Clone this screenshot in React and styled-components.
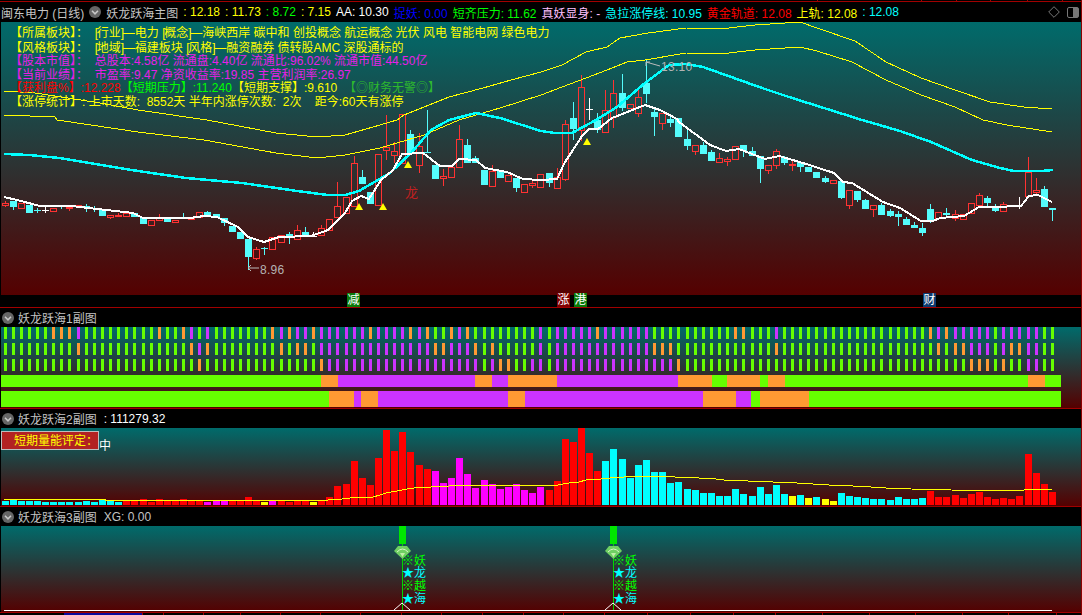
import React from "react";
import styled, { createGlobalStyle } from "styled-components";

const GlobalStyle = createGlobalStyle`
  html, body {
    margin: 0;
    background: #000;
    overflow: hidden;
  }
`;

const FONT = `"Liberation Sans", "Noto Sans CJK SC", sans-serif`;
const PANEL_BG = "linear-gradient(#006b6b, #550000)";

const Page = styled.div`
  width: 1082px;
  height: 615px;
  display: flex;
  flex-direction: column;
  background: #000;
  font-family: ${FONT};
  font-size: 12px;
  box-sizing: border-box;
  border-right: 1px solid #8c0000;
  overflow: hidden;
`;
const Rule = styled.div`
  flex: none;
  height: 1px;
  background: #a00000;
`;
const Axis = styled.svg`
  display: block;
  flex: none;
`;
const MainHeader = styled.div`
  flex: none;
  height: 20px;
  display: flex;
  align-items: center;
  padding-left: 1px;
  gap: 5px;
  white-space: pre;
`;
const SubHeader = styled.div`
  flex: none;
  height: 19px;
  display: flex;
  align-items: center;
  padding-left: 2px;
  white-space: pre;
`;
const Title = styled.span`
  color: #c4c4c4;
  margin-left: ${p => p.$indent || 0}px;
  margin-right: ${p => p.$after || 0}px;
`;
const Value = styled.span`
  color: ${p => p.$color};
`;
const Tools = styled.div`
  margin-left: auto;
  display: flex;
  align-items: center;
  gap: 7px;
  padding-right: 2px;
`;
const Panel = styled.div`
  position: relative;
  flex: none;
  height: ${p => p.$h}px;
  margin-left: 1px;
  background: ${PANEL_BG};
`;
const Chart = styled.svg`
  display: block;
  overflow: hidden;
  text {
    font-family: ${FONT};
  }
`;
const Info = styled.div`
  position: absolute;
  left: 9px;
  top: 5px;
  color: #ffff00;
  line-height: 13.6px;
  white-space: pre;
`;
const InfoRow = styled.div`
  color: ${p => p.$color || "#ffff00"};
  &:first-child {
    margin-bottom: 1px;
  }
`;
const Tone = styled.span`
  color: ${p => p.$color};
`;
const Square = styled.span`
  letter-spacing: -1.3px;
`;
const TagStrip = styled.div`
  position: relative;
  flex: none;
  height: 12px;
`;
const Tag = styled.span`
  position: absolute;
  left: ${p => p.$x}px;
  top: -2px;
  width: 13px;
  height: 14px;
  line-height: 14px;
  text-align: center;
  color: #fff;
  background: ${p => p.$bg};
`;
const VolumeBadge = styled.div`
  position: absolute;
  left: 0;
  top: 3px;
  width: 98px;
  height: 19px;
  box-sizing: border-box;
  border: 1px solid #bdbdbd;
  background: #b22222;
  color: #ffff00;
  padding-left: 12px;
  line-height: 18px;
`;
const VolumeLevel = styled.span`
  position: absolute;
  left: 98px;
  top: 8px;
  color: #fff;
`;

const CandleUp = "#ff3232";
const CandleDown = "#54fcfc";

// 蜡烛数据: 类型, 实体上沿, 实体下沿, 上影, 下影 (单位 1/3 像素, 以 y=120 为零点)
const CANDLES = [
  ["r", 250, 254, 242, 260], ["c", 243, 261, 243, 270], ["r", 250, 263], ["c", 255, 278],
  ["c", 270, 271, 263, 278], ["w", 270, 271, 262, 278], ["r", 265, 274], ["c", 259, 260, 254, 266],
  ["r", 262, 264, 256, 272], ["r", 256, 258], ["c", 258, 265, 252, 275], ["c", 263, 266, 258, 275],
  ["c", 270, 287], ["r", 286, 290, 286, 298], ["r", 286, 289, 280, 291], ["r", 280, 287],
  ["c", 280, 290], ["c", 290, 312], ["r", 300, 314], ["r", 294, 301, 282, 304],
  ["c", 297, 305], ["r", 300, 307], ["c", 291, 296, 280, 296], ["r", 290, 296],
  ["r", 277, 290], ["c", 277, 286, 272, 286], ["c", 283, 295], ["c", 294, 308, 294, 318],
  ["c", 318, 336], ["c", 336, 357], ["c", 357, 411, 357, 450], ["r", 388, 413, 382, 420],
  ["c", 384, 385, 380, 404], ["r", 352, 386, 352, 390], ["r", 344, 367], ["c", 343, 355, 337, 372],
  ["r", 331, 358, 315, 358], ["c", 337, 347, 322, 347], ["w", 347, 348, 335, 348], ["r", 325, 345, 316, 345],
  ["r", 297, 330], ["r", 259, 290, 186, 290], ["r", 230, 278], ["r", 130, 258, 108, 258],
  ["c", 171, 192, 150, 192], ["c", 217, 252], ["r", 103, 254], ["r", 82, 89, -15, 120],
  ["r", 92, 104, 65, 130], ["r", -18, 128], ["c", 42, 100, 30, 100], ["r", 78, 134, 40, 158],
  ["c", 95, 99, -30, 100], ["c", 135, 178], ["r", 168, 175, 148, 198], ["r", 140, 170],
  ["r", 57, 140, 15, 142], ["c", 75, 128, 58, 128], ["c", 115, 130, 108, 130], ["c", 150, 195],
  ["r", 153, 197, 135, 197], ["c", 153, 175], ["r", 165, 182], ["c", 175, 204, 175, 215],
  ["r", 193, 215], ["r", 190, 196, 180, 205], ["r", 162, 200], ["c", 160, 190, 160, 200],
  ["r", 172, 203, 145, 203], ["r", 12, 178, 0, 184], ["c", -5, 27, -55, 60], ["r", -98, 30, -134, 62],
  ["w", -32, -31, -65, 0], ["c", 0, 30, -20, 38], ["r", -30, 35, -90, 35], ["r", -80, -10, -120, 24],
  ["c", -80, -35, -138, -28], ["r", -47, -35], ["r", -68, -20, -90, -10], ["c", -110, -78, -180, -50],
  ["c", -24, -8, -40, 48], ["r", -20, 8, -20, 30], ["c", -3, 8, -15, 20], ["c", -5, 52],
  ["c", 57, 78, 20, 90], ["r", 76, 92, 76, 105], ["c", 76, 102, 66, 102], ["c", 97, 124, 90, 124],
  ["r", 114, 125, 100, 125], ["r", 118, 124, 110, 138], ["r", 79, 116], ["c", 76, 92, 76, 110],
  ["c", 92, 107, 82, 107], ["c", 107, 147, 107, 188], ["r", 136, 150, 136, 162], ["r", 94, 134, 88, 147],
  ["c", 115, 130, 108, 135], ["r", 131, 135, 118, 152], ["c", 127, 140, 127, 157], ["c", 140, 157],
  ["c", 155, 175], ["c", 173, 186, 168, 190], ["r", 181, 188], ["c", 183, 235, 183, 238],
  ["r", 210, 254, 210, 266], ["c", 212, 240, 212, 246], ["c", 241, 267, 238, 267], ["r", 256, 268, 256, 290],
  ["c", 255, 285, 250, 285], ["c", 273, 288, 268, 290], ["c", 282, 290, 272, 318], ["c", 297, 315, 292, 315],
  ["c", 315, 323, 307, 323], ["c", 324, 340, 310, 347], ["c", 267, 302, 252, 308], ["r", 277, 293],
  ["c", 279, 285, 265, 295], ["r", 281, 293, 270, 303], ["r", 281, 298], ["r", 250, 280],
  ["r", 226, 256, 220, 256], ["c", 233, 249, 228, 262], ["c", 262, 272, 252, 275], ["r", 253, 274, 245, 274],
  ["r", 254, 256], ["w", 255, 256, 232, 268], ["r", 155, 228, 112, 228], ["r", 210, 217, 175, 222],
  ["c", 207, 261, 198, 261], ["c", 264, 271, 264, 302],
];

const barX = i => Math.round(4.5 + 8.12 * i);
const py = v => 120 + v / 3;

const UPPER_BAND = "4,91 35,93 100,103 138,110 207,120 276,133 317,137 345,135 380,125 397,120 404,115 449,97 483,88 511,80 541,72 562,65 586,52 607,47 620,38 648,33 686,28 720,29 755,25 800,22 817,28 855,41 886,62 921,78 955,90 990,102 1024,107 1052,109";
const LOWER_BAND = "4,115 55,117 57,120 138,132 204,140 276,153 317,158 345,155 380,148 424,135 459,120 500,108 541,95 562,87 586,78 607,70 627,62 645,60 686,53 720,54 755,50 800,47 817,51 852,62 886,80 921,95 955,107 983,120 1007,125 1052,132";
const CYAN_LINE = "4,154 29,155 59,158 138,171 186,178 242,183 297,191 328,195 345,195 359,191 390,173 411,153 431,130 449,120 476,113 500,118 541,131 555,133 572,133 596,120 617,107 645,83 669,65 686,64 703,67 734,78 762,88 789,97 862,120 900,131 931,142 972,160 1000,168 1014,171 1041,171 1053,170";
const WHITE_LINE = "4,197 17,200 40,206 72,206 97,209 133,213 143,218 190,218 204,216 217,217 238,227 248,237 264,242 279,237 311,236 328,230 345,213 352,201 361,196 369,199 381,180 393,170 402,154 423,153 440,166 452,166 459,159 476,160 485,168 507,172 523,179 541,180 557,179 565,162 573,150 582,136 589,129 598,129 612,118 645,105 660,110 677,119 679,122 710,145 726,151 739,149 765,159 779,156 803,163 834,173 843,182 852,183 883,202 900,208 921,221 933,221 940,218 964,216 979,207 993,207 1021,206 1029,196 1038,195 1052,202";
const VOLUME_AVG = "4,499 105,499 105,500 328,500 342,499 350,498 359,497 373,497 380,495 386,493 397,491 407,489 414,488 431,487 449,486 462,485 528,485 541,486 558,485 569,483 579,482 586,480 601,479 610,478 624,477 651,476 675,477 699,478 716,479 724,480 748,481 773,482 797,483 813,484 829,485 853,486 871,487 886,488 911,489 951,490 992,491 1024,490 1041,489 1052,489";

const WARN_MARKS = [[359, 207], [383, 207], [408, 165], [587, 142]];

const Candle = ({ data, i }) => {
  const [kind, top, bottom, hi = top, lo = bottom] = data;
  const x = barX(i);
  if (kind === "w") {
    return (
      <g stroke="#fff">
        <line x1={x + 0.5} x2={x + 0.5} y1={py(hi)} y2={py(lo)} />
        <line x1={x - 3} x2={x + 4} y1={Math.round(py(top)) + 0.5} y2={Math.round(py(top)) + 0.5} />
      </g>
    );
  }
  const t = Math.round(py(top));
  const b = Math.round(py(bottom));
  if (kind === "r") {
    return (
      <g stroke={CandleUp} fill="none">
        <line x1={x + 0.5} x2={x + 0.5} y1={py(hi)} y2={t} />
        <line x1={x + 0.5} x2={x + 0.5} y1={b} y2={py(lo)} />
        <rect x={x - 3 + 0.5} y={t + 0.5} width={6} height={Math.max(b - t, 1)} />
      </g>
    );
  }
  return (
    <g stroke={CandleDown} fill={CandleDown}>
      <line x1={x + 0.5} x2={x + 0.5} y1={py(hi)} y2={py(lo)} />
      <rect x={x - 3} y={t} width={7} height={Math.max(b - t, 1)} stroke="none" />
    </g>
  );
};

const MainChart = () => (
  <Chart width="1080" height="273" viewBox="1 22 1080 273">
    <g shapeRendering="crispEdges">
      {CANDLES.map((c, i) => <Candle key={i} data={c} i={i} />)}
      <polyline points={UPPER_BAND} fill="none" stroke="#ffff00" strokeWidth="1" />
      <polyline points={LOWER_BAND} fill="none" stroke="#ffff00" strokeWidth="1" />
      <polyline points={CYAN_LINE} fill="none" stroke="#00ffff" strokeWidth="2.5" />
      <polyline points={WHITE_LINE} fill="none" stroke="#fff" strokeWidth="2" />
    </g>
    {WARN_MARKS.map(([x, y]) => (
      <polygon key={x} points={`${x},${y - 4} ${x + 4},${y + 3} ${x - 4},${y + 3}`} fill="#ffff00" />
    ))}
    <text x="405" y="197" fontSize="13" fill="#c02020">龙</text>
    <path d="M646 62 L646 66 M646 62 L650 62 M646 62 L660 66" stroke="#bbb" fill="none" />
    <text x="661" y="71" fontSize="12" fill="#b4b4b4" letterSpacing="0.3">13.10</text>
    <path d="M248 268 L259 268 M248 268 L251 265 M248 268 L251 271" stroke="#bbb" fill="none" />
    <text x="260" y="274" fontSize="12" fill="#b4b4b4" letterSpacing="0.3">8.96</text>
  </Chart>
);

// 每根K线的状态: 游程写法, 如 6g = 连续6根绿
const expandRuns = runs =>
  [...runs.matchAll(/(\d+)([gop])/g)].flatMap(m => Array(Number(m[1])).fill(m[2]));

const TREND_ROWS = [
  "6g3o1p9g1o2g1o1p1g1p7g1o1p1o2p1o6p1o4p1o1p1o2g1o1p1o8g1p1g5p1o6p10g2o3g1p18g1o1p1o5p1g5p2g",
  "9g1o13g1o1p1o8g1o1g2o1g14p2o3p1o1g1o5g1p1g12p3o12g1o19g1o1g2o3p1g1p2o2p2g",
  "24g1o14g1o19p1g1p2o2g2p1g15p1o35g3o1g1o2g2p2g",
].map(expandRuns);

const STRIPE = { g: "#66ff00", o: "#ff9933", p: "#cc33ff" };

const TREND_BANDS = [
  { y: 375, h: 12, stops: [[1, "g"], [321, "o"], [338, "p"], [475, "o"], [492, "p"], [508, "o"], [557, "p"], [678, "o"], [712, "g"], [727, "o"], [760, "g"], [768, "o"], [785, "g"], [1028, "o"], [1045, "g"], [1061, null]] },
  { y: 391, h: 16, stops: [[1, "g"], [329, "o"], [354, "p"], [361, "o"], [378, "p"], [508, "o"], [525, "p"], [703, "o"], [736, "p"], [751, "g"], [760, "o"], [809, "g"], [1061, null]] },
];

const TrendChart = () => (
  <Chart width="1080" height="81" viewBox="1 327 1080 81" shapeRendering="crispEdges">
    {TREND_ROWS.map((row, r) =>
      row.map((c, i) => (
        <rect key={`${r}-${i}`} x={barX(i) - 1} y={327 + r * 16} width="3" height="12" fill={STRIPE[c]} />
      ))
    )}
    {TREND_BANDS.map(band =>
      band.stops.slice(0, -1).map(([x, c], i) => (
        <rect key={`${band.y}-${x}`} x={x} y={band.y} width={band.stops[i + 1][0] - x} height={band.h} fill={STRIPE[c]} />
      ))
    )}
  </Chart>
);

const VOLUMES = [
  228, 225, 228, 228, 228, 231, 231, 231, 231, 231, 228, 231, 224, 227, 231,
  228, 228, 222, 231, 222, 227, 227, 222, 227, 228, 231, 227, 227, 228, 228,
  216, 228, 231, 227, 228, 231, 228, 228, 231, 228, 216, 183, 177, 108, 159,
  180, 99, 15, 78, 21, 81, 120, 132, 138, 174, 159, 99, 147, 189, 165,
  177, 192, 186, 177, 195, 204, 186, 195, 168, 42, 51, 9, 84, 138, 108,
  72, 102, 159, 120, 105, 141, 141, 174, 171, 192, 195, 204, 204, 213, 213,
  192, 207, 213, 186, 207, 180, 207, 213, 210, 219, 216, 222, 228, 204, 213,
  216, 219, 222, 222, 225, 216, 222, 222, 219, 198, 216, 216, 210, 219, 207,
  201, 216, 222, 219, 222, 213, 87, 144, 177, 201,
];

const volumeColor = i => {
  if ([32, 38, 97, 99, 101, 102].includes(i)) return "#ffff00";
  if (i === 33 || i === 25 || i === 26 || i === 27) return "#ff00ff";
  if (i < 15 || (i >= 74 && i < 114)) return "#00ffff";
  if (i >= 53 && i <= 66) return "#ff00ff";
  return "#ff0000";
};

const VolumeChart = () => (
  <Chart width="1080" height="78" viewBox="1 428 1080 78" shapeRendering="crispEdges">
    {VOLUMES.map((v, i) => {
      const y = Math.round(425 + v / 3);
      return <rect key={i} x={barX(i) - 3} y={y} width="7" height={505 - y} fill={volumeColor(i)} />;
    })}
    <polyline points={VOLUME_AVG} fill="none" stroke="#ffff00" strokeWidth="1" />
  </Chart>
);

const SIGNAL_ROWS = [
  { y: 565, mark: "※", word: "妖", fill: "#00ff00" },
  { y: 577, mark: "★", word: "龙", fill: "#00ffff" },
  { y: 590, mark: "※", word: "越", fill: "#00ff00" },
  { y: 603, mark: "★", word: "海", fill: "#00ffff" },
];

const SignalMark = ({ x }) => (
  <g>
    <rect x={x - 3} y="526" width="7" height="18" fill="#00e600" shapeRendering="crispEdges" />
    <rect x={x} y="544" width="1" height="66" fill="#00d800" shapeRendering="crispEdges" />
    <polygon points={`${x - 8},551 ${x - 4},546 ${x + 5},546 ${x + 9},551 ${x + 0.5},559`} fill="#6fd063" />
    <path d={`M${x - 5} 552 Q${x + 0.5} 546 ${x + 6} 552`} stroke="#d8f5c8" fill="none" />
    <polygon points={`${x - 2},553 ${x + 3},553 ${x + 0.5},557`} fill="#c0f0a8" />
    {SIGNAL_ROWS.map(r => (
      <g key={r.word} fill={r.fill}>
        <text x={x} y={r.y} fontSize="12" style={{ fontFamily: "Noto Sans CJK SC" }} fontWeight="700">{r.mark}</text>
        <text x={x + 12} y={r.y} fontSize="12">{r.word}</text>
      </g>
    ))}
    <polyline points={`${x - 8},610 ${x},603 ${x + 8},610`} fill="none" stroke="#fff" />
  </g>
);

const SignalChart = () => (
  <Chart width="1080" height="86" viewBox="1 526 1080 86">
    <line x1="4" x2="1052" y1="610.5" y2="610.5" stroke="#fff" />
    <SignalMark x={402} />
    <SignalMark x={613} />
  </Chart>
);

const TICKS = [142, 163, 203, 240, 280, 320, 360, 401, 441, 482, 523, 563, 604, 647, 690, 733, 775, 822, 869, 915, 962, 1008, 1056];

const BottomAxis = () => (
  <Axis width="1081" height="2">
    <rect x="64" y="0" width="79" height="2" fill="#0a0a9c" />
    {TICKS.map(x => <rect key={x} x={x} y="0" width="1" height="2" fill="#a00000" />)}
  </Axis>
);

const TopAxis = () => (
  <Axis width="1081" height="2">
    <rect x="0" y="1" width="1081" height="1" fill="#a00000" />
    {[817, 921, 956, 990, 1027, 1062].map(x => <rect key={x} x={x} y="0" width="1" height="1" fill="#a00000" />)}
  </Axis>
);

const ChevronDot = () => (
  <svg width="12" height="12" viewBox="0 0 12 12">
    <circle cx="6" cy="6" r="6" fill="#666" />
    <path d="M3 4.8 L6 7.8 L9 4.8" stroke="#c8c8c8" strokeWidth="1.6" fill="none" />
  </svg>
);

const SubTitle = ({ name, children }) => (
  <SubHeader>
    <ChevronDot />
    <Title $indent={4} $after={7}>{name}</Title>
    {children}
  </SubHeader>
);

const Bracketed = ({ children }) => (
  <>
    <Square>[</Square>{children}<Square>]</Square>
  </>
);

export default function App() {
  return (
    <Page>
      <GlobalStyle />
      <TopAxis />
      <MainHeader>
        <Title>闽东电力 (日线)</Title>
        <ChevronDot />
        <Title>妖龙跃海主图</Title>
        <Value $color="#ffff00">: 12.18</Value>
        <Value $color="#ffff00">: 11.73</Value>
        <Value $color="#00ff00">: 8.72</Value>
        <Value $color="#ffff00">: 7.15</Value>
        <Value $color="#ffffff">AA: 10.30</Value>
        <Value $color="#0000ff">捉妖: 0.00</Value>
        <Value $color="#00ff00">短齐压力: 11.62</Value>
        <Value $color="#ffc0ff">真妖显身: -</Value>
        <Value $color="#00ffff">急拉涨停线: 10.95</Value>
        <Value $color="#ff0000">黄金轨道: 12.08</Value>
        <Value $color="#ffff00">上轨: 12.08</Value>
        <Value $color="#00ffff">: 12.08</Value>
        <Tools>
          <svg width="12" height="12" viewBox="0 0 12 12">
            <path d="M6 0.7 L11.3 6 L6 11.3 L0.7 6 Z" stroke="#777" fill="none" />
          </svg>
          <svg width="12" height="11" viewBox="0 0 12 11">
            <rect x="0.5" y="0.5" width="11" height="10" rx="1.5" stroke="#777" fill="none" />
            <rect x="6" y="1" width="5" height="9" fill="#777" />
          </svg>
        </Tools>
      </MainHeader>
      <Panel $h={273}>
        <MainChart />
        <Info>
          <InfoRow>【所属板块】：  <Bracketed>行业</Bracketed>—电力 <Bracketed>概念</Bracketed>—海峡西岸 碳中和 创投概念 航运概念 光伏 风电 智能电网 绿色电力</InfoRow>
          <InfoRow>【风格板块】：  <Bracketed>地域</Bracketed>—福建板块 <Bracketed>风格</Bracketed>—融资融券 债转股AMC 深股通标的</InfoRow>
          <InfoRow $color="#e81ee8">【股本市值】：  总股本:4.58亿 流通盘:4.40亿 流通比:96.02% 流通市值:44.50亿</InfoRow>
          <InfoRow $color="#e81ee8">【当前业绩】：  市盈率:9.47 净资收益率:19.85 主营利润率:26.97</InfoRow>
          <InfoRow>
            <Tone $color="#ff0000">【获利盘%】:12.228</Tone>
            <Tone $color="#00ff00">【短期压力】:11.240</Tone>
            【短期支撑】:9.610  <Tone $color="#2eb82e">【◎财务无警◎】</Tone>
          </InfoRow>
          <InfoRow>【涨停统计】: 上市天数:  8552天 半年内涨停次数:  2次    距今:60天有涨停</InfoRow>
        </Info>
      </Panel>
      <TagStrip>
        <Tag $x={347} $bg="#0a7a0a">减</Tag>
        <Tag $x={557} $bg="#800000">涨</Tag>
        <Tag $x={574} $bg="#0a7a0a">港</Tag>
        <Tag $x={923} $bg="#0c3a6e">财</Tag>
      </TagStrip>
      <Rule />
      <SubTitle name="妖龙跃海1副图" />
      <Panel $h={81}>
        <TrendChart />
      </Panel>
      <Rule />
      <SubTitle name="妖龙跃海2副图">
        <Value $color="#ffffff">: 111279.32</Value>
      </SubTitle>
      <Panel $h={78}>
        <VolumeChart />
        <VolumeBadge>短期量能评定：</VolumeBadge>
        <VolumeLevel>中</VolumeLevel>
      </Panel>
      <Rule />
      <SubTitle name="妖龙跃海3副图">
        <Value $color="#c4c4c4">XG: 0.00</Value>
      </SubTitle>
      <Panel $h={86}>
        <SignalChart />
      </Panel>
      <Rule />
      <BottomAxis />
    </Page>
  );
}
